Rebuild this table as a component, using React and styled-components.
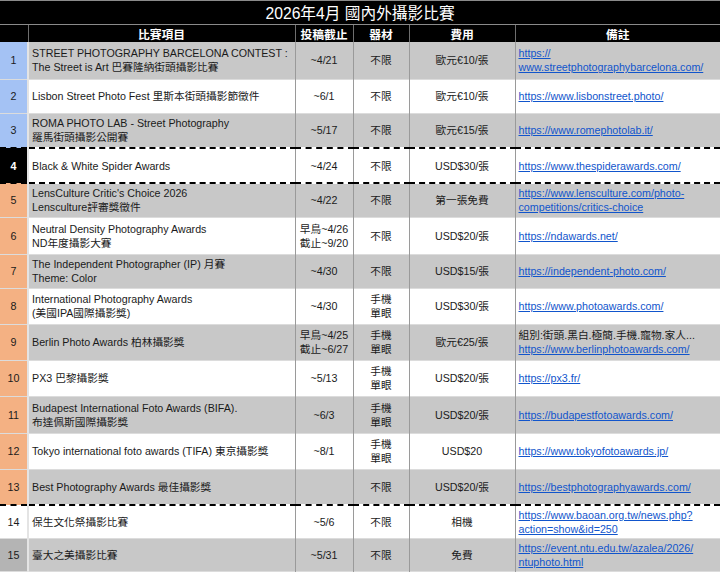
import styled, { createGlobalStyle } from "styled-components";

const GlobalStyle = createGlobalStyle`
  html, body {
    margin: 0;
    padding: 0;
    background: #ffffff;
  }
  body {
    font-family: "Liberation Sans", "Noto Sans CJK TC", Arial, sans-serif;
  }
`;

const rows = [
  { no: 1, tag: "blue", h: 37, name: ["STREET PHOTOGRAPHY BARCELONA CONTEST :", "The Street is Art 巴賽隆納街頭攝影比賽"], due: ["~4/21"], gear: ["不限"], fee: "歐元€10/張", link: ["https://", "www.streetphotographybarcelona.com/"] },
  { no: 2, tag: "blue", h: 34, name: ["Lisbon Street Photo Fest 里斯本街頭攝影節徵件"], due: ["~6/1"], gear: ["不限"], fee: "歐元€10/張", link: ["https://www.lisbonstreet.photo/"] },
  { no: 3, tag: "blue", h: 35, dashed: true, name: ["ROMA PHOTO LAB - Street Photography", "羅馬街頭攝影公開賽"], due: ["~5/17"], gear: ["不限"], fee: "歐元€15/張", link: ["https://www.romephotolab.it/"] },
  { no: 4, tag: "black", h: 35, dashed: true, name: ["Black & White Spider Awards"], due: ["~4/24"], gear: ["不限"], fee: "USD$30/張", link: ["https://www.thespiderawards.com/"] },
  { no: 5, tag: "orange", h: 34, name: ["LensCulture Critic's Choice 2026", "Lensculture評審獎徵件"], due: ["~4/22"], gear: ["不限"], fee: "第一張免費", link: ["https://www.lensculture.com/photo-", "competitions/critics-choice"] },
  { no: 6, tag: "orange", h: 37, name: ["Neutral Density Photography Awards", "ND年度攝影大賽"], due: ["早鳥~4/26", "截止~9/20"], gear: ["不限"], fee: "USD$20/張", link: ["https://ndawards.net/"] },
  { no: 7, tag: "orange", h: 34, name: ["The Independent Photographer (IP) 月賽", "Theme: Color"], due: ["~4/30"], gear: ["不限"], fee: "USD$15/張", link: ["https://independent-photo.com/"] },
  { no: 8, tag: "orange", h: 36, name: ["International Photography Awards", "(美國IPA國際攝影獎)"], due: ["~4/30"], gear: ["手機", "單眼"], fee: "USD$30/張", link: ["https://www.photoawards.com/"] },
  { no: 9, tag: "orange", h: 36, name: ["Berlin Photo Awards 柏林攝影獎"], due: ["早鳥~4/25", "截止~6/27"], gear: ["手機", "單眼"], fee: "歐元€25/張", note: "組別:街頭.黑白.極簡.手機.寵物.家人...", link: ["https://www.berlinphotoawards.com/"] },
  { no: 10, tag: "orange", h: 36, name: ["PX3 巴黎攝影獎"], due: ["~5/13"], gear: ["手機", "單眼"], fee: "USD$20/張", link: ["https://px3.fr/"] },
  { no: 11, tag: "orange", h: 37, name: ["Budapest International Foto Awards (BIFA).", "布達佩斯國際攝影獎"], due: ["~6/3"], gear: ["手機", "單眼"], fee: "USD$20/張", link: ["https://budapestfotoawards.com/"] },
  { no: 12, tag: "orange", h: 36, name: ["Tokyo international foto awards (TIFA) 東京攝影獎"], due: ["~8/1"], gear: ["手機", "單眼"], fee: "USD$20", link: ["https://www.tokyofotoawards.jp/"] },
  { no: 13, tag: "orange", h: 36, dashed: true, name: ["Best Photography Awards 最佳攝影獎"], due: [], gear: ["不限"], fee: "USD$20/張", link: ["https://bestphotographyawards.com/"] },
  { no: 14, tag: "white", h: 33, name: ["保生文化祭攝影比賽"], due: ["~5/6"], gear: ["不限"], fee: "相機", link: ["https://www.baoan.org.tw/news.php?", "action=show&id=250"] },
  { no: 15, tag: "grey", h: 33, name: ["臺大之美攝影比賽"], due: ["~5/31"], gear: ["不限"], fee: "免費", link: ["https://event.ntu.edu.tw/azalea/2026/", "ntuphoto.html"] },
];

const tagColors = {
  blue: { bg: "#a4c2f4", fg: "#1a1a1a" },
  black: { bg: "#000000", fg: "#ffffff" },
  orange: { bg: "#f4b183", fg: "#1a1a1a" },
  white: { bg: "#ffffff", fg: "#1a1a1a" },
  grey: { bg: "#b4b4b4", fg: "#1a1a1a" },
};

const Sheet = styled.table`
  width: 720px;
  border-collapse: collapse;
  table-layout: fixed;
  font-size: 10.7px;
  color: #1a1a1a;
`;

const TitleCell = styled.th`
  height: 22px;
  padding: 0;
  background: #000000;
  color: #ffffff;
  font-size: 15.7px;
  font-weight: normal;
  text-align: center;
  border-top: 1px solid #8a8a8a;
  border-bottom: 1px solid #8a8a8a;
`;

const HeadCell = styled.th`
  height: 17px;
  padding: 0;
  background: #000000;
  color: #ffffff;
  font-size: 11.8px;
  font-weight: bold;
  text-align: center;
  border-left: 1px solid #6e6e6e;
  &:first-child {
    border-left: none;
  }
`;

const Row = styled.tr`
  height: ${(p) => p.$h}px;
  background: ${(p) => (p.$odd ? "#c8c8c8" : "#ffffff")};
  border-bottom: ${(p) => (p.$dashed ? "2px dashed #000000" : "1px solid #dcdcdc")};
`;

const NumCell = styled.td`
  padding: 0;
  text-align: center;
  background: ${(p) => tagColors[p.$tag].bg};
  color: ${(p) => tagColors[p.$tag].fg};
  font-weight: ${(p) => (p.$tag === "black" ? "bold" : "normal")};
  border-right: 2px solid #e4e4e4;
`;

const Cell = styled.td`
  padding: 0 3px;
  line-height: 14px;
  white-space: nowrap;
  overflow: hidden;
  vertical-align: middle;
  text-align: ${(p) => p.$align || "left"};
  border-right: 1px solid #9a9a9a;
  &:last-child {
    border-right: none;
  }
`;

const Link = styled.a`
  color: #1155cc;
  text-decoration: underline;
`;

const Lines = ({ items }) =>
  items.map((t, i) => (
    <span key={i}>
      {i > 0 && <br />}
      {t}
    </span>
  ));

export default function App() {
  return (
    <>
      <GlobalStyle />
      <Sheet>
        <colgroup>
          <col style={{ width: 28 }} />
          <col style={{ width: 267 }} />
          <col style={{ width: 58 }} />
          <col style={{ width: 56 }} />
          <col style={{ width: 106 }} />
          <col style={{ width: 205 }} />
        </colgroup>
        <thead>
          <tr>
            <TitleCell colSpan={6}>2026年4月 國內外攝影比賽</TitleCell>
          </tr>
          <tr>
            <HeadCell />
            <HeadCell>比賽項目</HeadCell>
            <HeadCell>投稿截止</HeadCell>
            <HeadCell>器材</HeadCell>
            <HeadCell>費用</HeadCell>
            <HeadCell>備註</HeadCell>
          </tr>
        </thead>
        <tbody>
          {rows.map((r) => (
            <Row key={r.no} $h={r.h} $odd={r.no % 2 === 1} $dashed={r.dashed}>
              <NumCell $tag={r.tag}>{r.no}</NumCell>
              <Cell>
                <Lines items={r.name} />
              </Cell>
              <Cell $align="center">
                <Lines items={r.due} />
              </Cell>
              <Cell $align="center">
                <Lines items={r.gear} />
              </Cell>
              <Cell $align="center">{r.fee}</Cell>
              <Cell>
                {r.note && (
                  <>
                    {r.note}
                    <br />
                  </>
                )}
                <Link href="#">
                  <Lines items={r.link} />
                </Link>
              </Cell>
            </Row>
          ))}
        </tbody>
      </Sheet>
    </>
  );
}
